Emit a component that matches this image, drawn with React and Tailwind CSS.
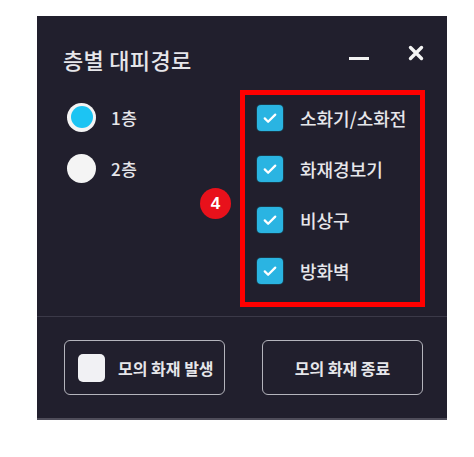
import React from "react";

const floors = [
  { label: "1층", checked: true },
  { label: "2층", checked: false },
];

const layers = ["소화기/소화전", "화재경보기", "비상구", "방화벽"];

const CheckBox = () => (
  <div className="flex items-center justify-center w-[26px] h-[26px] rounded-[4px] bg-[#2ab4e2] shadow-[0_0_0_1px_#1a3a4a]">
    <svg className="w-[18px] h-[18px]" viewBox="0 0 24 24" fill="none" stroke="white" strokeWidth={3} strokeLinecap="round" strokeLinejoin="round">
      <path d="M5 12.5l4.5 4.5L19 7.5" />
    </svg>
  </div>
);

const App = () => {
  return (
    <div className="min-h-[457px] bg-white pt-[16px] pl-[37px] font-['Noto_Sans_CJK_KR','Noto_Sans',sans-serif]">
      <div className="flex flex-col w-[410px] h-[404px] bg-[#211f2d] border-b-[2px] border-[#4f4d5a] text-[#e6e6ea]">
        {/* Header */}
        <div className="flex items-center h-[74px] pt-[12px] pl-[26px] pr-[23px]">
          <div className="text-[22px] font-medium leading-none tracking-[0.3px]">층별 대피경로</div>
          <div className="ml-auto w-[20px] h-[3px] bg-[#f2f2f2] mr-[39px]" />
          <svg className="w-[16px] h-[16px] -mt-[12px]" viewBox="0 0 16 16" stroke="#f4f4f4" strokeWidth={3.4} strokeLinecap="round">
            <path d="M2.5 2.5l11 11M13.5 2.5l-11 11" />
          </svg>
        </div>

        {/* Body */}
        <div className="relative flex h-[228px] pl-[30px] pr-[22px]">
          <div className="flex-1 flex flex-col gap-[22px] pt-[13px]">
            {floors.map((f) => (
              <div key={f.label} className="flex items-center h-[29px] gap-[15px]">
                <div className="w-[29px] h-[29px] rounded-full bg-[#f4f4f4] flex items-center justify-center">
                  {f.checked && <div className="w-[22px] h-[22px] rounded-full bg-[#1cc4f3]" />}
                </div>
                <span className="text-[17px] font-medium leading-none tracking-[0.5px]">{f.label}</span>
              </div>
            ))}
          </div>

          <div className="flex flex-col gap-[25px] w-[185px] h-[217px] border-[5px] border-[#ff0000] pt-[10px] pl-[12px]">
            {layers.map((name) => (
              <div key={name} className="flex items-center h-[26px] gap-[17px]">
                <CheckBox />
                <span className="text-[18px] font-medium leading-none">{name}</span>
              </div>
            ))}
          </div>

          {/* annotation badge */}
          <div className="absolute left-[163px] top-[98px] w-[31px] h-[31px] rounded-full bg-[#e8111b] flex items-center justify-center text-white text-[17px] font-bold leading-none font-['Liberation_Sans',sans-serif]">
            4
          </div>
        </div>

        <div className="h-px bg-[#3b3948]" />

        {/* Footer */}
        <div className="flex gap-[37px] pl-[27px] py-[23px]">
          <button type="button" className="flex items-center w-[161px] h-[55px] border-[1.5px] border-[#b4b4bc] rounded-[6px] pl-[13px] gap-[13px]">
            <div className="w-[27px] h-[28px] rounded-[5px] bg-[#f1f1f4]" />
            <span className="text-[16px] font-bold leading-none">모의 화재 발생</span>
          </button>
          <button type="button" className="flex items-center justify-center w-[161px] h-[55px] border-[1.5px] border-[#b4b4bc] rounded-[6px]">
            <span className="text-[16px] font-bold leading-none">모의 화재 종료</span>
          </button>
        </div>
      </div>
    </div>
  );
};

export default App;
